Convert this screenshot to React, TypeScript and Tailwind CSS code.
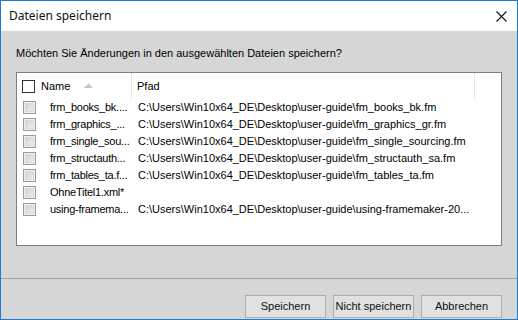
import React from 'react';

const rows = [
  { name: 'frm_books_bk....', path: 'C:\\Users\\Win10x64_DE\\Desktop\\user-guide\\fm_books_bk.fm' },
  { name: 'frm_graphics_...', path: 'C:\\Users\\Win10x64_DE\\Desktop\\user-guide\\fm_graphics_gr.fm' },
  { name: 'frm_single_sou...', path: 'C:\\Users\\Win10x64_DE\\Desktop\\user-guide\\fm_single_sourcing.fm' },
  { name: 'frm_structauth...', path: 'C:\\Users\\Win10x64_DE\\Desktop\\user-guide\\fm_structauth_sa.fm' },
  { name: 'frm_tables_ta.f...', path: 'C:\\Users\\Win10x64_DE\\Desktop\\user-guide\\fm_tables_ta.fm' },
  { name: 'OhneTitel1.xml*', path: '' },
  { name: 'using-framema...', path: 'C:\\Users\\Win10x64_DE\\Desktop\\user-guide\\using-framemaker-20...' },
];

const DisabledBox: React.FC = () => (
  <div className="w-[13px] h-[13px] shrink-0 border border-[#9a9a9a] bg-[#f0f0f0] p-[1px]">
    <div className="w-full h-full border border-[#d9d9d9] bg-gradient-to-br from-[#d2d2d2] to-[#efefef]" />
  </div>
);

const App: React.FC = () => {
  return (
    <div className="w-[518px] h-[320px] border border-[#1b7cd3] bg-[#d6d6d6] flex flex-col text-[11px] text-black font-['Liberation_Sans',Arial,sans-serif]">
      {/* Title bar */}
      <div className="h-[30px] bg-white flex items-center justify-between pl-[8px] pr-[10px]">
        <span className="text-[12px] text-[#111] font-['Noto_Sans','Liberation_Sans',sans-serif]">Dateien speichern</span>
        <svg width="11" height="11" viewBox="0 0 11 11">
          <path d="M0.5 0.5 L10.5 10.5 M10.5 0.5 L0.5 10.5" stroke="#111" strokeWidth="1.1" />
        </svg>
      </div>

      {/* Body */}
      <div className="flex-1 flex flex-col px-[15px]">
        <div className="mt-[15px] h-[14px] leading-[14px]">
          Möchten Sie Änderungen in den ausgewählten Dateien speichern?
        </div>

        <div className="mt-[12px] h-[174px] border border-[#7f7f7f] bg-white">
          {/* Header */}
          <div className="h-[26px] flex items-center">
            <div className="w-[115px] h-full flex items-center pl-[5px] border-r border-[#e5e5e5]">
              <div className="w-[13px] h-[13px] border border-[#333] bg-white" />
              <span className="ml-[6px]">Name</span>
              <svg className="ml-[14px] mb-[2px]" width="9" height="5" viewBox="0 0 9 5">
                <path d="M0 5 L4.5 0.5 L9 5 Z" fill="#c4c4c4" />
              </svg>
            </div>
            <div className="w-[343px] h-full flex items-center pl-[5px] border-r border-[#e5e5e5]">Pfad</div>
          </div>

          {/* Rows */}
          {rows.map((r) => (
            <div key={r.name} className="h-[17px] flex items-center">
              <div className="w-[115px] shrink-0 flex items-center pl-[6px]">
                <DisabledBox />
                <span className="ml-[14px] w-[82px] whitespace-nowrap tracking-[-0.25px]">{r.name}</span>
              </div>
              <div className="pl-[6px] whitespace-nowrap">{r.path}</div>
            </div>
          ))}
        </div>
      </div>

      {/* Separator */}
      <div className="mt-[16px] h-px bg-[#a3a3a3]" />

      {/* Buttons */}
      <div className="h-[40px] flex justify-end items-start gap-[7px] pt-[16px] pr-[15px]">
        {['Speichern', 'Nicht speichern', 'Abbrechen'].map((b) => (
          <button
            key={b}
            className="w-[81px] h-[23px] border border-[#adadad] bg-[#e1e1e1] flex items-center justify-center text-[11px] text-[#111]"
          >
            {b}
          </button>
        ))}
      </div>
    </div>
  );
};

export default App;
